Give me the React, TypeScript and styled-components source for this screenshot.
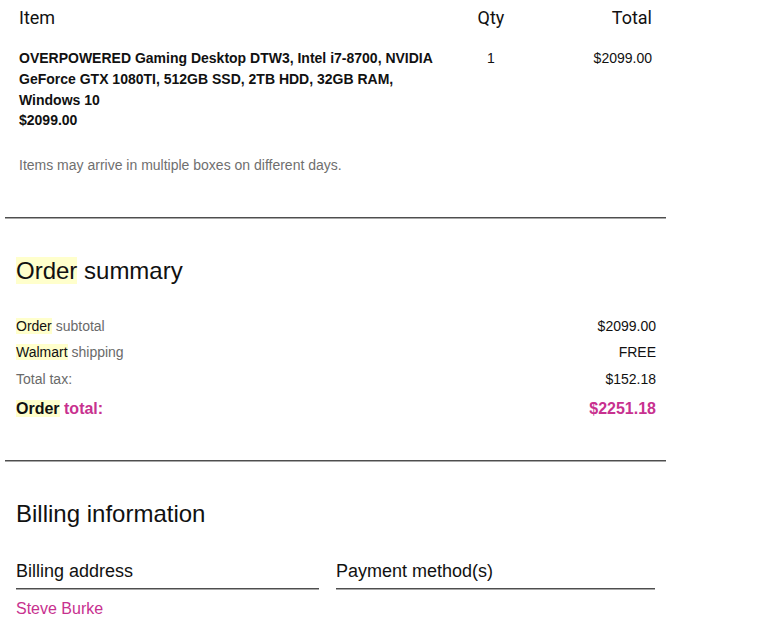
import React from "react";
import styled, { createGlobalStyle } from "styled-components";

const Global = createGlobalStyle`
  html, body { margin: 0; padding: 0; background: #fff; }
  body { font-family: "Liberation Sans", Arial, sans-serif; color: #111; }
`;

const MAGENTA = "#c8318f";

const Page = styled.div`
  width: 661px;
  margin-left: 5px;
  display: flex;
  flex-direction: column;
`;

const ItemsTable = styled.div`
  display: grid;
  grid-template-columns: 431px 82px 120px;
  padding: 7px 14px 0 14px;
`;

const HeadCell = styled.div<{ $align: "left" | "center" | "right" }>`
  font-family: Roboto, "Liberation Sans", sans-serif;
  font-size: 18px;
  line-height: 21.6px;
  color: #111;
  text-align: ${(p) => p.$align};
`;

const BodyCell = styled.div<{ $align: "left" | "center" | "right"; $bold?: boolean }>`
  margin-top: 19.4px;
  font-size: 14px;
  line-height: 20.8px;
  font-weight: ${(p) => (p.$bold ? 700 : 400)};
  color: #111;
  text-align: ${(p) => p.$align};
`;

const Note = styled.div`
  padding: 24px 0 0 14px;
  font-size: 14px;
  line-height: 20.8px;
  color: #6f6f6f;
`;

const Rule = styled.hr<{ $top: number }>`
  margin: ${(p) => p.$top}px 0 0;
  height: 0;
  border: none;
  border-top: 1px solid #4e4e4e;
  border-bottom: 1px solid #a8a8a8;
`;

const SectionTitle = styled.h2<{ $top: number }>`
  margin: ${(p) => p.$top}px 0 0 11px;
  font-size: 24px;
  line-height: 28.8px;
  font-weight: 400;
  color: #111;
`;

const Hl = styled.span`
  background: #ffffcc;
  color: #111;
`;

const Summary = styled.div`
  margin-top: 27px;
  padding: 0 10px 0 11px;
  display: flex;
  flex-direction: column;
`;

const SumRow = styled.div<{ $total?: boolean }>`
  display: flex;
  justify-content: space-between;
  font-size: ${(p) => (p.$total ? "16px" : "14px")};
  line-height: ${(p) => (p.$total ? "32px" : "26.6px")};
  font-weight: ${(p) => (p.$total ? 700 : 400)};
`;

const Label = styled.span`
  color: #6a6a6a;
`;

const Value = styled.span<{ $accent?: boolean }>`
  color: ${(p) => (p.$accent ? MAGENTA : "#111")};
`;

const Accent = styled.span`
  color: ${MAGENTA};
`;

const BillingGrid = styled.div`
  margin: 32.5px 0 0 11px;
  display: grid;
  grid-template-columns: 303px 319px;
  column-gap: 17px;
`;

const ColHead = styled.div`
  font-size: 18px;
  line-height: 21.6px;
  color: #111;
  padding-bottom: 6px;
  border-bottom: 1px solid #4e4e4e;
  box-shadow: 0 1px 0 #a8a8a8;
`;

const Name = styled.div`
  margin-top: 10px;
  font-size: 16px;
  line-height: 19.2px;
  color: ${MAGENTA};
`;

export default function App() {
  return (
    <>
      <Global />
      <Page>
        <ItemsTable>
          <HeadCell $align="left">Item</HeadCell>
          <HeadCell $align="center">Qty</HeadCell>
          <HeadCell $align="right">Total</HeadCell>
          <BodyCell $align="left" $bold>
            OVERPOWERED Gaming Desktop DTW3, Intel i7-8700, NVIDIA GeForce GTX 1080TI, 512GB SSD, 2TB HDD, 32GB RAM, Windows 10
            <br />
            $2099.00
          </BodyCell>
          <BodyCell $align="center">1</BodyCell>
          <BodyCell $align="right">$2099.00</BodyCell>
        </ItemsTable>
        <Note>Items may arrive in multiple boxes on different days.</Note>
        <Rule $top={41} />
        <SectionTitle $top={38}>
          <Hl>Order</Hl> summary
        </SectionTitle>
        <Summary>
          <SumRow>
            <Label>
              <Hl>Order</Hl> subtotal
            </Label>
            <Value>$2099.00</Value>
          </SumRow>
          <SumRow>
            <Label>
              <Hl>Walmart</Hl> shipping
            </Label>
            <Value>FREE</Value>
          </SumRow>
          <SumRow>
            <Label>Total tax:</Label>
            <Value>$152.18</Value>
          </SumRow>
          <SumRow $total>
            <span>
              <Hl>Order</Hl> <Accent>total:</Accent>
            </span>
            <Value $accent>$2251.18</Value>
          </SumRow>
        </Summary>
        <Rule $top={35.5} />
        <SectionTitle $top={37.5}>Billing information</SectionTitle>
        <BillingGrid>
          <div>
            <ColHead>Billing address</ColHead>
            <Name>Steve Burke</Name>
          </div>
          <div>
            <ColHead>Payment method(s)</ColHead>
          </div>
        </BillingGrid>
      </Page>
    </>
  );
}
